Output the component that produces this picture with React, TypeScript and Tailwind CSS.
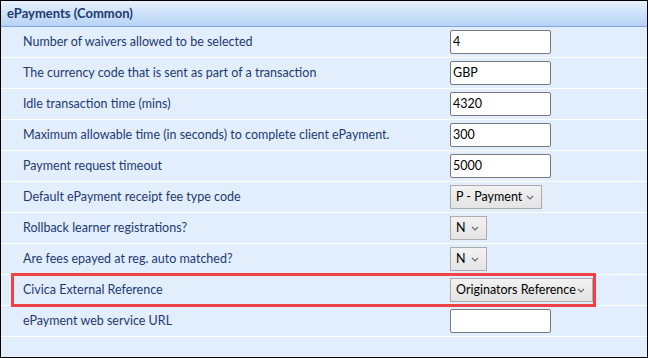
import React from 'react';

type Row = {
  label: string;
  kind: 'text' | 'select';
  value: string;
  w?: string;
  highlight?: boolean;
};

const ROWS: Row[] = [
  { label: 'Number of waivers allowed to be selected', kind: 'text', value: '4' },
  { label: 'The currency code that is sent as part of a transaction', kind: 'text', value: 'GBP' },
  { label: 'Idle transaction time (mins)', kind: 'text', value: '4320' },
  { label: 'Maximum allowable time (in seconds) to complete client ePayment.', kind: 'text', value: '300' },
  { label: 'Payment request timeout', kind: 'text', value: '5000' },
  { label: 'Default ePayment receipt fee type code', kind: 'select', value: 'P - Payment', w: 'w-[92px]' },
  { label: 'Rollback learner registrations?', kind: 'select', value: 'N', w: 'w-[37px]' },
  { label: 'Are fees epayed at reg. auto matched?', kind: 'select', value: 'N', w: 'w-[37px]' },
  { label: 'Civica External Reference', kind: 'select', value: 'Originators Reference', w: 'w-[143px]', highlight: true },
  { label: 'ePayment web service URL', kind: 'text', value: '' },
];

const Chevron = () => (
  <svg width="8" height="5" viewBox="0 0 8 5" className="shrink-0">
    <path d="M1 1 L4 4 L7 1" fill="none" stroke="#6b6b6b" strokeWidth="1.2" />
  </svg>
);

const Field: React.FC<{ row: Row }> = ({ row }) => {
  if (row.kind === 'text') {
    return (
      <div className="w-[101px] h-[24px] shrink-0 bg-white border border-[#7a7a7a] rounded-[2px] flex items-center px-[2px] text-[12.5px] text-black">
        {row.value}
      </div>
    );
  }
  return (
    <div
      className={`${row.w} h-[24px] shrink-0 whitespace-nowrap bg-gradient-to-b from-[#f2f2f2] to-[#e4e4e4] border border-[#acacac] flex items-center justify-between pl-[5px] pr-[7px] text-[12.5px] text-black`}
    >
      <span>{row.value}</span>
      <Chevron />
    </div>
  );
};

export default function App() {
  return (
    <div className="w-[648px] h-[358px] bg-white font-['Lato',sans-serif]">
      <div className="w-full h-full border border-black flex flex-col bg-[#e3eefc]">
        <div className="h-[26px] shrink-0 bg-gradient-to-b from-[#e6f0fd] to-[#b6d3f6] border-b border-[#7ea6dc] flex items-center pl-[6px] text-[13px] font-bold text-[#1d3a6e]">
          ePayments (Common)
        </div>
        {ROWS.map((row) => (
          <div key={row.label} className="h-[31px] shrink-0 border-b border-white px-[10px] flex items-center">
            <div
              className={`flex-1 flex items-center ${
                row.highlight ? 'border-[3px] border-[#ef4146] -my-[1px] h-[34px]' : 'h-[31px] border-[3px] border-transparent'
              }`}
            >
              <div className="w-[436px] pl-[9px] text-[12.5px] text-[#1c3a72] whitespace-nowrap">{row.label}</div>
              <Field row={row} />
            </div>
            <div className="w-[46px]" />
          </div>
        ))}
      </div>
    </div>
  );
}
